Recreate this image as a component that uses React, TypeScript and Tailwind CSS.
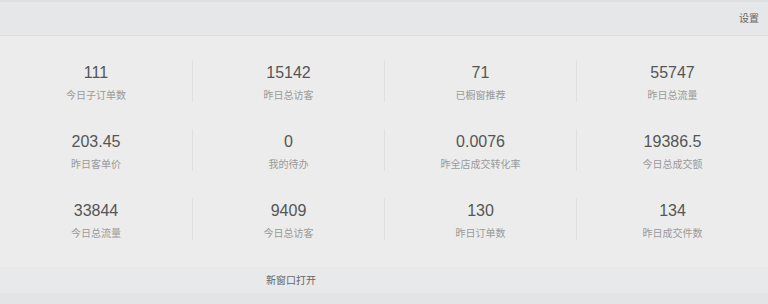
const stats = [
  { value: "111", label: "今日子订单数" },
  { value: "15142", label: "昨日总访客" },
  { value: "71", label: "已橱窗推荐" },
  { value: "55747", label: "昨日总流量" },
  { value: "203.45", label: "昨日客单价" },
  { value: "0", label: "我的待办" },
  { value: "0.0076", label: "昨全店成交转化率" },
  { value: "19386.5", label: "今日总成交额" },
  { value: "33844", label: "今日总流量" },
  { value: "9409", label: "今日总访客" },
  { value: "130", label: "昨日订单数" },
  { value: "134", label: "昨日成交件数" },
];

const font = {
  fontFamily: '"Liberation Sans", "Noto Sans CJK SC", sans-serif',
};

export default function App() {
  return (
    <div className="h-[304px] w-[768px] bg-[#e3e4e6]" style={font}>
      <div className="h-[2px] bg-[#dedfe1]" />
      <div className="flex h-[34px] items-center justify-end border-b border-[#dcdddf] bg-[#e6e7e8] pr-[9px]">
        <span className="text-[10px] text-[#666]">设置</span>
      </div>
      <div className="grid h-[231px] grid-cols-4 content-start bg-[#ececec] pt-[24px]">
        {stats.map((s, i) => (
          <div
            key={s.label}
            className={`mb-[27px] flex h-[42px] flex-col items-center ${i % 4 !== 0 ? "border-l border-[#e0e0e0]" : ""}`}
          >
            <span className="mt-[2px] text-[16px] leading-[22px] text-[#555]">{s.value}</span>
            <span className="mt-[5px] text-[10px] leading-[14px] text-[#9a9a9a]">{s.label}</span>
          </div>
        ))}
      </div>
      <div className="flex h-[26px] items-center bg-[#e8e9ea] pl-[266px]">
        <span className="text-[10px] text-[#666]">新窗口打开</span>
      </div>
    </div>
  );
}
